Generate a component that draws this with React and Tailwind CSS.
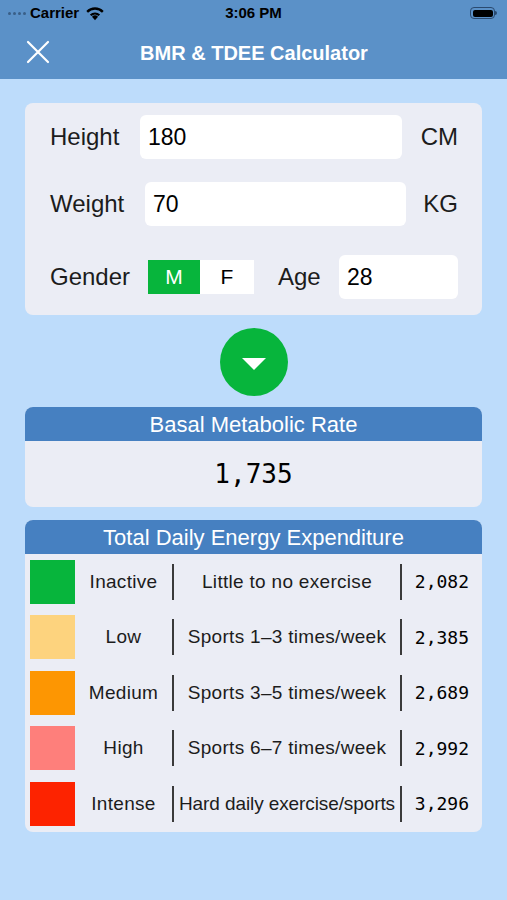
import React from "react";

const levels = [
  { color: "bg-[#07b53c]", name: "Inactive", desc: "Little to no exercise", kcal: "2,082" },
  { color: "bg-[#fdd37e]", name: "Low", desc: "Sports 1–3 times/week", kcal: "2,385" },
  { color: "bg-[#fd9602]", name: "Medium", desc: "Sports 3–5 times/week", kcal: "2,689" },
  { color: "bg-[#fe7f7b]", name: "High", desc: "Sports 6–7 times/week", kcal: "2,992" },
  { color: "bg-[#fd2300]", name: "Intense", desc: "Hard daily exercise/sports", kcal: "3,296", tight: true },
];

function StatusBar() {
  return (
    <div className="h-[26px] flex items-center justify-between px-[8px] text-[15px] text-black">
      <div className="flex items-center gap-[4px] w-[120px]">
        <span className="flex gap-[2px] items-center">
          {[0, 1, 2, 3].map((i) => (
            <span key={i} className="w-[3px] h-[3px] rounded-full bg-[#3a5f88]" />
          ))}
        </span>
        <span className="font-semibold">Carrier</span>
        <svg width="20" height="15" viewBox="0 0 18 13" className="ml-[2px]">
          <path d="M9 12.5 L6.3 9.4 A4 4 0 0 1 11.7 9.4 Z" fill="#000" />
          <path d="M4.4 7.3 A6.8 6.8 0 0 1 13.6 7.3 L12.2 8.8 A4.8 4.8 0 0 0 5.8 8.8 Z" fill="#000" />
          <path d="M1.2 4.2 A11 11 0 0 1 16.8 4.2 L15.3 5.8 A8.8 8.8 0 0 0 2.7 5.8 Z" fill="#000" />
        </svg>
      </div>
      <span className="font-semibold">3:06 PM</span>
      <div className="w-[120px] flex justify-end pr-[2px]">
        <div className="flex items-center">
          <div className="w-[25px] h-[12px] rounded-[4px] border border-[#2a4a70] p-[1.5px]">
            <div className="w-full h-full rounded-[2px] bg-black" />
          </div>
          <div className="w-[1.5px] h-[4px] bg-[#2a4a70] rounded-r" />
        </div>
      </div>
    </div>
  );
}

function Field({ value, className }) {
  return (
    <div className={`bg-white rounded-[6px] flex items-center px-[8px] text-[23px] text-black ${className}`}>
      {value}
    </div>
  );
}

export default function App() {
  return (
    <div className="w-[507px] h-[900px] bg-[#bddcfb] font-['Liberation_Sans',Arial,sans-serif] text-[#1c1c1c] overflow-hidden">
      <div className="bg-[#5b91c8]">
        <StatusBar />
        <div className="h-[53px] flex items-center relative">
          <svg width="24" height="24" viewBox="0 0 24 24" className="absolute left-[26px] top-[14px]">
            <path d="M2 2 L22 22 M22 2 L2 22" stroke="#fff" strokeWidth="2.2" strokeLinecap="round" />
          </svg>
          <div className="flex-1 text-center text-white text-[20px] font-bold pl-[1px]">
            BMR &amp; TDEE Calculator
          </div>
        </div>
      </div>

      <div className="mx-[25px] mt-[24px] bg-[#ebedf5] rounded-[8px] pt-[12px] pb-[16px] pl-[25px] pr-[24px] flex flex-col">
        <div className="flex items-center h-[44px]">
          <span className="text-[24px] w-[90px]">Height</span>
          <Field value="180" className="h-[44px] w-[262px]" />
          <span className="text-[24px] ml-auto">CM</span>
        </div>
        <div className="flex items-center h-[44px] mt-[23px]">
          <span className="text-[24px] w-[95px]">Weight</span>
          <Field value="70" className="h-[44px] w-[261px]" />
          <span className="text-[24px] ml-auto">KG</span>
        </div>
        <div className="flex items-center h-[44px] mt-[29px]">
          <span className="text-[24px] w-[98px]">Gender</span>
          <div className="flex h-[34px] w-[106px] bg-white text-[21px]">
            <div className="w-[52px] bg-[#07b53c] text-white flex items-center justify-center">M</div>
            <div className="flex-1 flex items-center justify-center text-black">F</div>
          </div>
          <span className="text-[24px] ml-[24px] w-[61px]">Age</span>
          <Field value="28" className="h-[44px] flex-1" />
        </div>
      </div>

      <div className="flex justify-center mt-[13px]">
        <div className="w-[68px] h-[68px] rounded-full bg-[#07b53c] flex items-center justify-center">
          <svg width="26" height="14" viewBox="0 0 26 14" className="mt-[4px]">
            <path d="M1 1 L25 1 L13 13 Z" fill="#fff" />
          </svg>
        </div>
      </div>

      <div className="mx-[25px] mt-[11px] bg-[#ebedf5] rounded-[8px] overflow-hidden">
        <div className="h-[34px] bg-[#4680c1] text-white text-[22px] flex items-center justify-center">
          Basal Metabolic Rate
        </div>
        <div className="h-[66px] flex items-center justify-center font-['DejaVu_Sans_Mono',monospace] text-[26px] text-black">
          1,735
        </div>
      </div>

      <div className="mx-[25px] mt-[13px] bg-[#ebedf5] rounded-[8px] overflow-hidden">
        <div className="h-[34px] bg-[#4680c1] text-white text-[22px] flex items-center justify-center">
          Total Daily Energy Expenditure
        </div>
        <div className="flex flex-col">
          {levels.map((l) => (
            <div key={l.name} className="h-[55.5px] flex items-center pl-[5px] pr-[13px]">
              <div className={`w-[45px] h-[44px] ${l.color}`} />
              <div className="w-[97px] text-center text-[19px] tracking-[0.3px]">{l.name}</div>
              <div className="w-[2px] h-[36px] bg-[#3a3a3a]" />
              <div
                className={`w-[226px] text-center text-[19px] whitespace-nowrap ${
                  l.tight ? "tracking-[-0.1px]" : "tracking-[0.3px]"
                }`}
              >
                {l.desc}
              </div>
              <div className="w-[2px] h-[36px] bg-[#3a3a3a]" />
              <div className="flex-1 text-right font-['DejaVu_Sans_Mono',monospace] text-[18px] text-black">
                {l.kcal}
              </div>
            </div>
          ))}
        </div>
      </div>
    </div>
  );
}
